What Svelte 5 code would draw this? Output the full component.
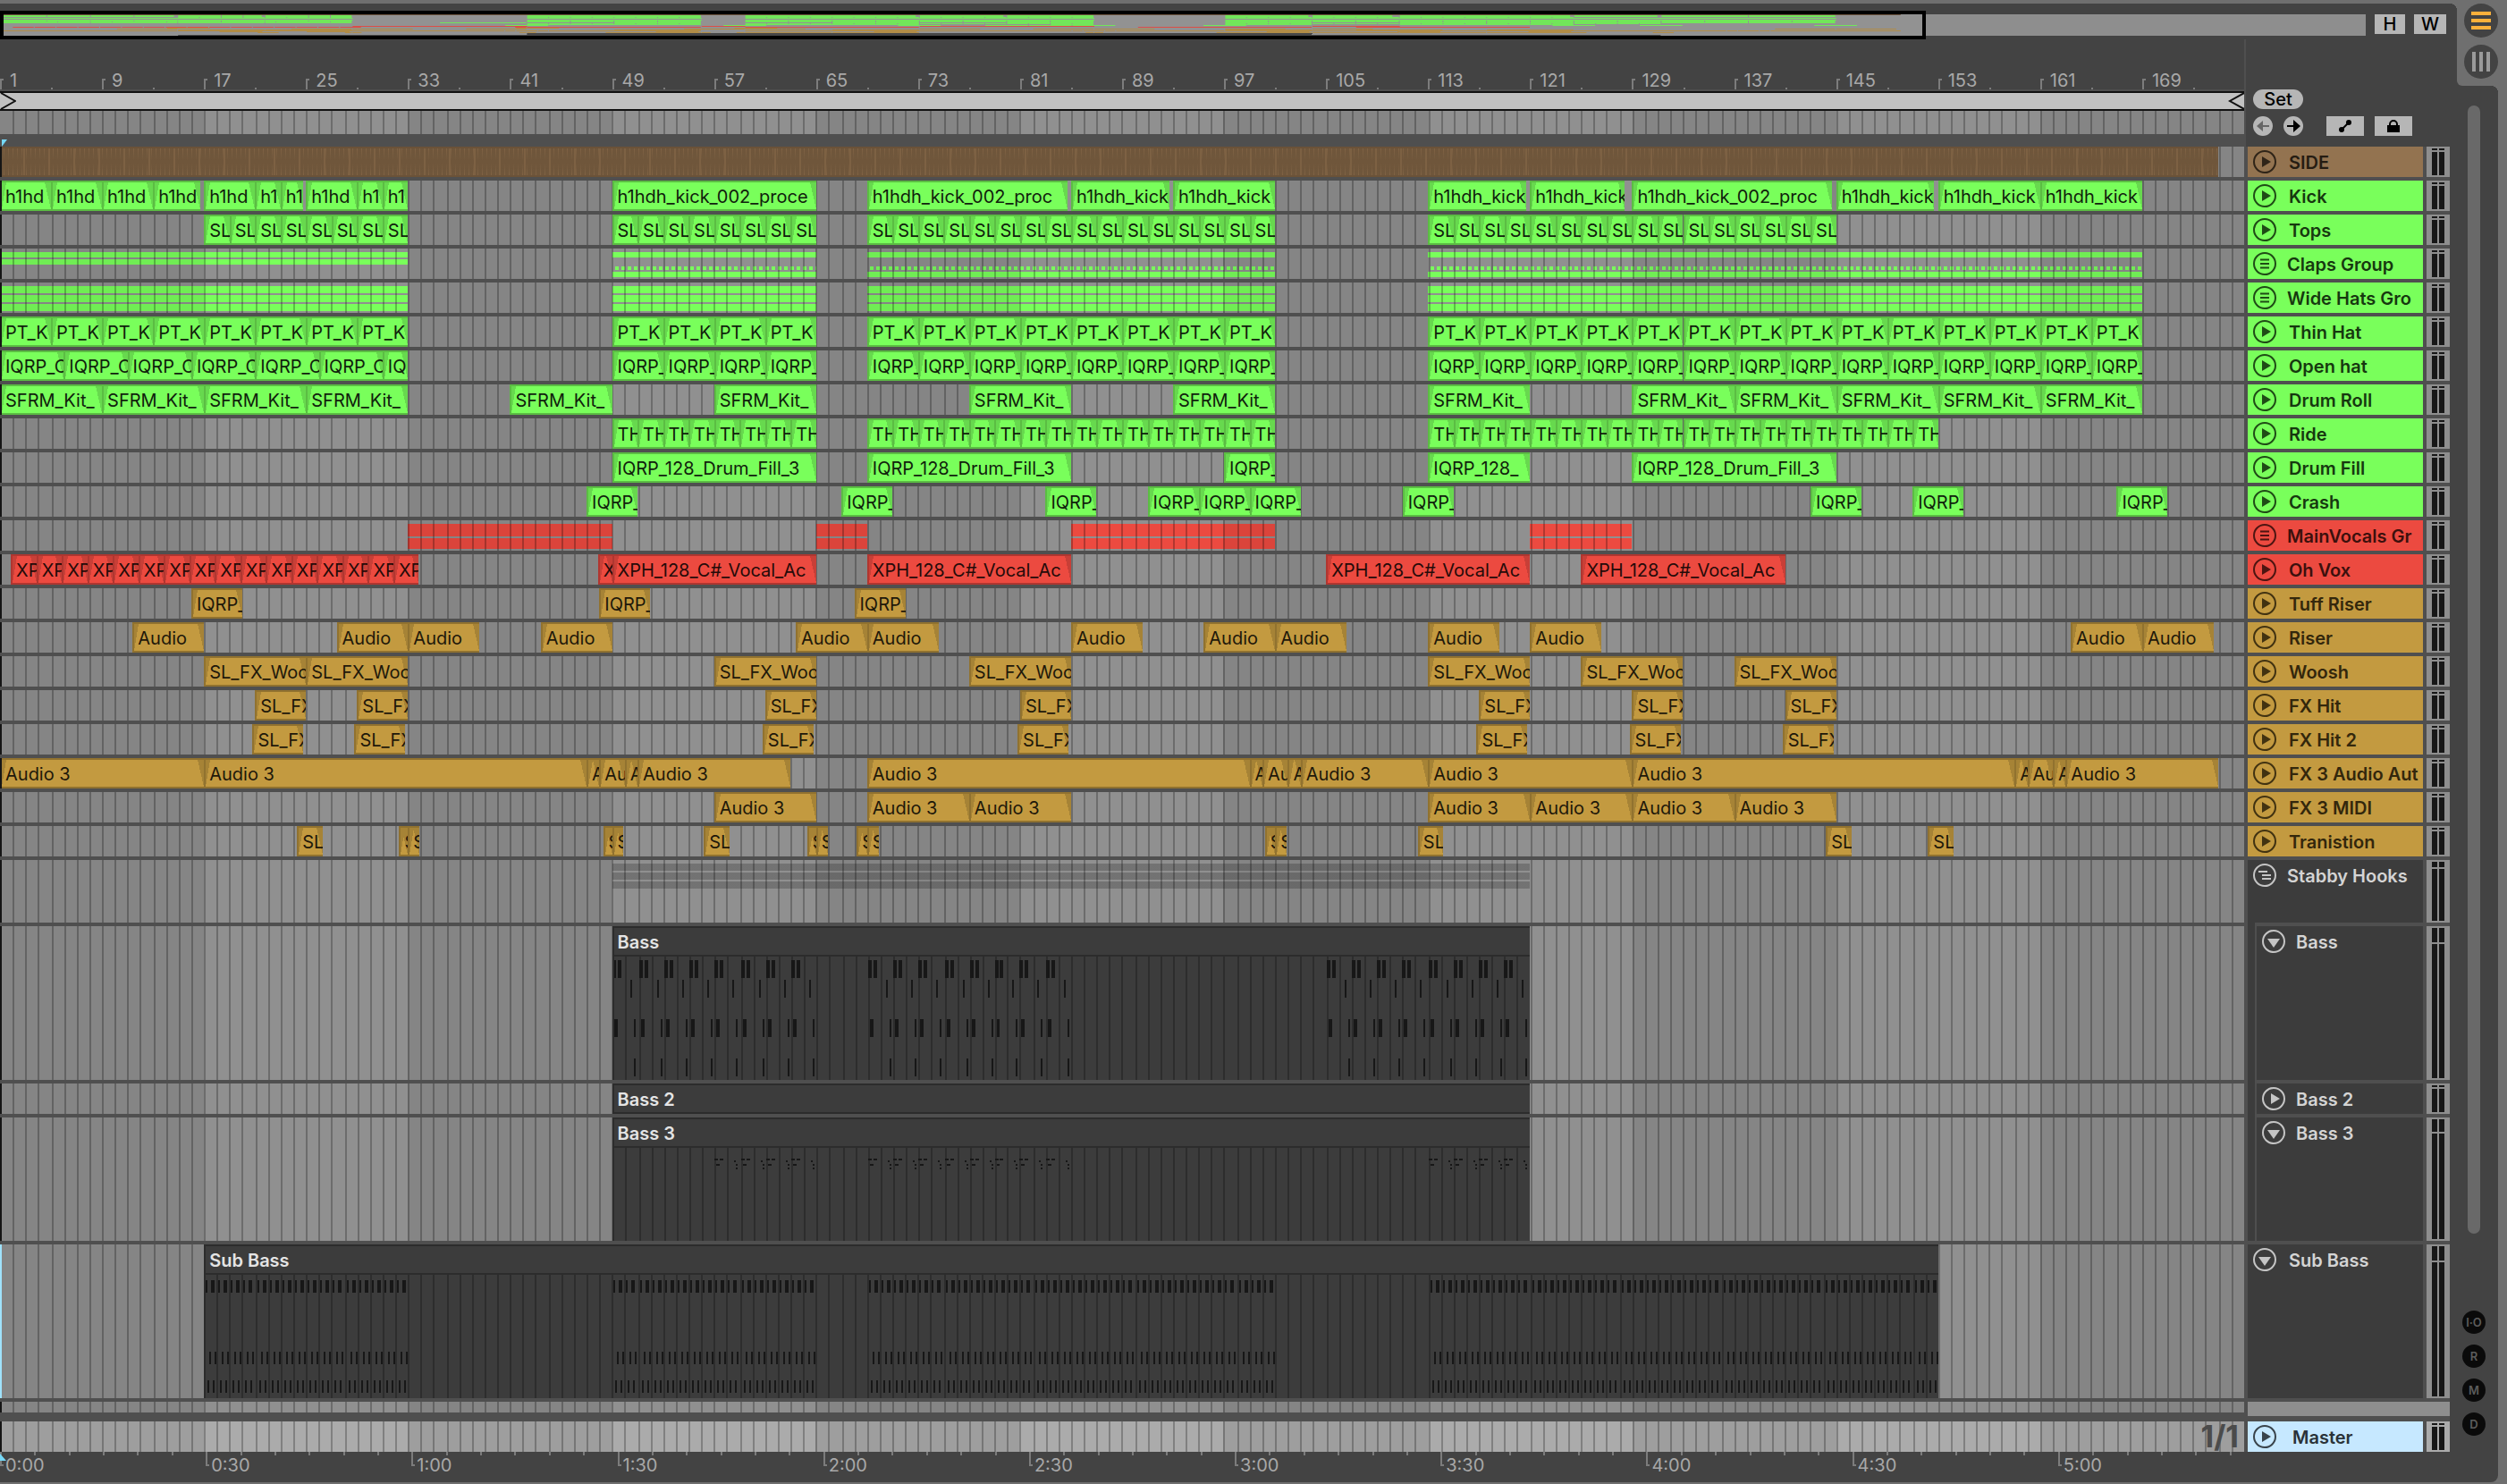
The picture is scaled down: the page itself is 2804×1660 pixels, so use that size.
<script lang="ts">
  type Clip = { from: number; to: number; name: string };
  type Track = {
    name: string;
    color: string;
    size?: string;
    icon?: string;
    child?: boolean;
    selected?: boolean;
    clips?: Clip[];
    bands?: { from: number; to: number; style: string }[];
    midi?: { from: number; to: number; notes: string };
    overview: [number, number];
  };

  const BARS = 176;
  const UNIT = 14.26;
  const pct = (bars: number) => (bars * 100) / BARS;
  const snap = (bars: number) => 2 * Math.round((bars * UNIT) / 2);

  // clips of equal length, one after another
  function run(from: number, to: number, step: number, name: string): Clip[] {
    const out: Clip[] = [];
    for (let b = from; b < to - 0.01; b += step) out.push({ from: b, to: Math.min(b + step, to), name });
    return out;
  }
  const at = (starts: number[], length: number, name: string): Clip[] =>
    starts.map((from) => ({ from, to: from + length, name }));
  const cuts = (points: number[], name: string): Clip[] =>
    points.slice(0, -1).map((from, i) => ({ from, to: points[i + 1], name: shorten(name, points[i + 1] - from) }));

  // keep about as much of a name as its clip has room for
  function shorten(name: string, bars: number) {
    if (name === 'Audio 3') return bars < 1.5 ? 'A' : bars < 3 ? 'Au' : name;
    if (name.startsWith('XPH')) return bars < 2 ? 'X' : name;
    if (name.startsWith('IQRP')) return bars < 6 ? 'IQRP_' : bars < 10 ? 'IQRP_128_' : name;
    if (name.startsWith('h1hdh')) return name.slice(0, bars < 3 ? 2 : bars < 6 ? 4 : bars < 10 ? 10 : bars < 16 ? 19 : 20);
    return name;
  }

  const lines = Array.from({ length: BARS - 1 }, (_, i) => `M${snap(i + 1)} 0h2v10h-2z`).join('');
  const shades = [0, 32, 64, 96, 128, 160].map((b) => `M${snap(b)} 0H${snap(Math.min(b + 16, BARS))}V10H${snap(b)}z`).join('');

  const note = (bar: number, dx: number, y: number, w: number, h: number) =>
    `M${snap(bar - 1) + dx} ${y}h${w}v${h}h-${w}z`;

  function bassNotes(): string {
    let d = '';
    for (const start of [49, 69, 105]) {
      for (let b = start; b < start + 16; b += 2) {
        d += note(b, 0, 4, 4, 20) + note(b, 6, 4, 4, 20);
        d += note(b, 20, 26, 2, 20);
        d += note(b, 2, 70, 4, 20) + note(b, 24, 70, 2, 20);
        d += note(b, 24, 114, 2, 20);
      }
    }
    return d;
  }

  function bass3Notes(): string {
    let d = '';
    for (const [start, end] of [[57, 65], [69, 85], [113, 121]]) {
      for (let b = start; b < end; b += 2) {
        d += note(b, 0, 12, 4, 2) + note(b, 6, 12, 4, 2) + note(b, 22, 14, 2, 2);
        d += note(b, 2, 18, 4, 2) + note(b, 24, 18, 2, 2) + note(b, 24, 22, 2, 2);
      }
    }
    return d;
  }

  function subNotes(): string {
    let d = '';
    for (const [start, end] of [[17, 33], [49, 65], [69, 101], [113, 153]]) {
      for (let b = start; b < end; b++) {
        d += note(b, 2, 6, 2, 14) + note(b, 8, 6, 4, 14);
        d += note(b, 6, 86, 2, 14) + note(b, 12, 86, 2, 14);
        d += note(b, 4, 118, 2, 14) + note(b, 10, 118, 2, 14);
      }
    }
    return d;
  }

  const sections = [[1, 33], [49, 65], [69, 101], [113, 169]];
  const hits = [21, 29, 61, 81, 117, 129, 141];
  const kick = 'h1hdh_kick_002_processed';

  const tracks: Track[] = [
    { name: 'SIDE', color: 'brown', clips: [{ from: 1, to: 175, name: '' }], overview: [0, 1] },
    {
      name: 'Kick', color: 'green', overview: [1, 2],
      clips: [
        ...cuts([1, 5, 9, 13, 16.7], kick), ...cuts([17, 21, 23, 24.75], kick), ...cuts([25, 29, 31, 33], kick),
        ...cuts([49, 65], kick), ...cuts([69, 84.7], kick), ...cuts([85, 92.75], kick), ...cuts([93, 101], kick),
        ...cuts([113, 120.7], kick), ...cuts([121, 128.4], kick), ...cuts([129, 144.7], kick),
        ...cuts([145, 152.7], kick), ...cuts([153, 161, 169], kick)
      ]
    },
    {
      name: 'Tops', color: 'green', overview: [3, 1],
      clips: [[17, 33], [49, 65], [69, 101], [113, 145]].flatMap(([a, b]) => run(a, b, 2, 'SL'))
    },
    {
      name: 'Claps Group', color: 'green', icon: 'group', overview: [4, 1],
      bands: sections.map(([from, to], i) => ({ from, to, style: i ? 'claps' : 'claps-intro' }))
    },
    {
      name: 'Wide Hats Gro', color: 'green', icon: 'group', overview: [6, 1],
      bands: sections.map(([from, to]) => ({ from, to, style: 'thirds' }))
    },
    { name: 'Thin Hat', color: 'green', overview: [7, 1], clips: sections.flatMap(([a, b]) => run(a, b, 4, 'PT_K')) },
    {
      name: 'Open hat', color: 'green', overview: [8, 1],
      clips: [
        ...run(1, 31, 5, 'IQRP_O'), { from: 31, to: 33, name: 'IQ' },
        ...sections.slice(1).flatMap(([a, b]) => run(a, b, 4, 'IQRP_'))
      ]
    },
    {
      name: 'Drum Roll', color: 'green', overview: [9, 1],
      clips: at([1, 9, 17, 25, 41, 57, 77, 93, 113, 129, 137, 145, 153, 161], 8, 'SFRM_Kit_')
    },
    {
      name: 'Ride', color: 'green', overview: [10, 1],
      clips: [[49, 65], [69, 101], [113, 153]].flatMap(([a, b]) => run(a, b, 2, 'TH'))
    },
    {
      name: 'Drum Fill', color: 'green', overview: [11, 1],
      clips: [[49, 65], [69, 85], [97, 101], [113, 121], [129, 145]].flatMap((p) => cuts(p, 'IQRP_128_Drum_Fill_3'))
    },
    { name: 'Crash', color: 'green', overview: [12, 1], clips: at([47, 67, 83, 91, 95, 99, 111, 143, 151, 167], 4, 'IQRP_') },
    {
      name: 'MainVocals Gr', color: 'red', icon: 'group', overview: [13, 1],
      bands: [[33, 49], [65, 69], [85, 101], [121, 129]].map(([from, to]) => ({ from, to, style: 'halves' }))
    },
    {
      name: 'Oh Vox', color: 'red', overview: [14, 1],
      clips: [...run(1.85, 33.85, 2, 'XP'), ...cuts([47.9, 49, 65], 'XPH_128_C#_Vocal_Ac'), ...at([69, 105, 125], 16, 'XPH_128_C#_Vocal_Ac')]
    },
    { name: 'Tuff Riser', color: 'gold', overview: [15, 1], clips: at([16, 48, 68], 4, 'IQRP_') },
    {
      name: 'Riser', color: 'gold', overview: [16, 1],
      clips: at([11.4, 27.4, 33, 43.4, 63.4, 69, 85, 95.4, 101, 113, 121, 163.4, 169], 5.6, 'Audio')
    },
    { name: 'Woosh', color: 'gold', overview: [17, 1], clips: at([17, 25, 57, 77, 113, 125, 137], 8, 'SL_FX_Woo') },
    { name: 'FX Hit', color: 'gold', overview: [18, 1], clips: at(hits, 4, 'SL_FX') },
    { name: 'FX Hit 2', color: 'gold', overview: [19, 1], clips: at(hits.map((b) => b - 0.2), 4, 'SL_FX') },
    {
      name: 'FX 3 Audio Aut', color: 'gold', overview: [18, 1],
      clips: [...cuts([1, 17, 47, 48, 50, 51, 63], 'Audio 3'), ...cuts([69, 99, 100, 102, 103, 113, 129, 159, 160, 162, 163, 175], 'Audio 3')]
    },
    { name: 'FX 3 MIDI', color: 'gold', overview: [20, 1], clips: at([57, 69, 77, 113, 121, 129, 137], 8, 'Audio 3') },
    {
      name: 'Tranistion', color: 'gold', overview: [20, 1],
      clips: [
        ...at([24.3, 56.2, 112.2, 144.2, 152.2], 2, 'SL'), ...cuts([32.3, 33, 33.9], 'S'), ...cuts([48.3, 49, 49.9], 'S'),
        ...cuts([64.3, 65, 65.9], 'S'), ...cuts([68.2, 69, 69.9], 'S'), ...cuts([100.2, 101, 101.9], 'S')
      ]
    },
    { name: 'Stabby Hooks', color: 'dark', size: 'stack', icon: 'nested', overview: [21, 1], bands: [{ from: 49, to: 121, style: 'thirds' }] },
    { name: 'Bass', color: 'dark', size: 'tall', icon: 'fold', child: true, overview: [21, 1], midi: { from: 49, to: 121, notes: bassNotes() } },
    { name: 'Bass 2', color: 'dark', child: true, overview: [22, 1], midi: { from: 49, to: 121, notes: '' } },
    { name: 'Bass 3', color: 'dark', size: 'mid', icon: 'fold', child: true, overview: [22, 1], midi: { from: 49, to: 121, notes: bass3Notes() } },
    { name: 'Sub Bass', color: 'dark', size: 'tall', icon: 'fold', selected: true, overview: [23, 1], midi: { from: 17, to: 153, notes: subNotes() } }
  ];

  const spans = (t: Track) => [...(t.clips ?? []), ...(t.bands ?? []), ...(t.midi ? [t.midi] : [])];
  const barLabels = Array.from({ length: 22 }, (_, i) => 1 + i * 8);
  const HALF_MINUTE = 16.14;
  const timeMarks = Array.from({ length: 66 }, (_, i) => i);
  const clock = (s: number) => `${Math.floor(s / 60)}:${String(s % 60).padStart(2, '0')}`;
</script>

{#snippet grid()}
  <svg class="grid" viewBox="0 0 2510 10" preserveAspectRatio="none" aria-hidden="true">
    <path class="shade" d={shades} />
    <path class="lines" d={lines} />
  </svg>
{/snippet}

{#snippet icon(kind: string)}
  <svg class="icon" viewBox="0 0 26 26" aria-hidden="true">
    <circle cx="13" cy="13" r="12" fill="none" stroke="currentColor" stroke-width="2" />
    {#if kind === 'group'}
      <path d="M8 8.5h10M8 13h10M8 17.5h10" stroke="currentColor" stroke-width="2" />
    {:else if kind === 'nested'}
      <path d="M6 9h10M10 13h10M10 17h10" stroke="currentColor" stroke-width="2" />
    {:else if kind === 'fold'}
      <path d="M6 10h14l-7 10z" fill="currentColor" />
    {:else}
      <path d="M10 7l10 6-10 6z" fill="currentColor" />
    {/if}
  </svg>
{/snippet}

{#snippet meter()}
  <div class="meter">
    <div class="channel"><i class="peak"></i><i class="level"></i></div>
    <div class="channel"><i class="peak"></i><i class="level"></i></div>
  </div>
{/snippet}

<div class="app">
  <nav class="views" aria-label="Views">
    <button aria-label="Arrangement view">
      <svg viewBox="0 0 38 38"><path d="M8 11h22M8 19h22M8 27h22" stroke="#fbb03b" stroke-width="4" /></svg>
    </button>
    <button aria-label="Session view">
      <svg viewBox="0 0 38 38"><path d="M11 8v22M19 8v22M27 8v22" stroke="#9a9a9a" stroke-width="4" /></svg>
    </button>
  </nav>

  <div class="panel">
    <div class="overview-row">
      <div class="overview">
        <svg class="window" viewBox="0 0 2146 24" preserveAspectRatio="none" aria-hidden="true">
          {#each tracks as t}
            {#each spans(t) as s}
              <rect class="mini {t.color}" x={(s.from - 1) * 12.2} y={t.overview[0]} width={(s.to - s.from) * 12.2 - (t.bands ? 0 : 1)} height={t.overview[1]} />
            {/each}
          {/each}
        </svg>
        <div class="beyond"></div>
      </div>
      <button class="flat zoom-height">H</button>
      <button class="flat zoom-width">W</button>
    </div>

    <div class="body">
      <div class="arranger">
        <div class="head">
          <div class="rulers">
            <div class="bars">
              {#each barLabels as bar}
                <span class="mark" style="left: {pct(bar - 1)}%">{bar}</span>
                <i class="minor" style="left: {pct(bar + 3)}%"></i>
              {/each}
            </div>
            <div class="loop">
              <svg viewBox="0 0 18 18"><path d="M1 0l16 9-16 9" fill="none" stroke="#111" stroke-width="2" /></svg>
              <svg viewBox="0 0 18 18"><path d="M18 0L2 9l16 9" fill="none" stroke="#111" stroke-width="2" /></svg>
            </div>
            <div class="scrub">{@render grid()}</div>
            <div class="locators"><i></i></div>
          </div>
          <div class="controls">
            <button class="set">Set</button>
            <div class="tools">
              <button class="round" aria-label="Previous locator">
                <svg viewBox="0 0 22 22"><path d="M11 5l-7 6 7 6v-5h7v-2h-7z" fill="#666" /></svg>
              </button>
              <button class="round" aria-label="Next locator">
                <svg viewBox="0 0 22 22"><path d="M11 4l8 7-8 7v-6H4v-2h7z" fill="#000" /></svg>
              </button>
              <button class="flat tool automation" aria-label="Automation mode">
                <svg viewBox="0 0 42 22"><path d="M17 15l8-8" stroke="#000" stroke-width="2" /><circle cx="17" cy="15" r="3" /><circle cx="25" cy="7" r="3" /></svg>
              </button>
              <button class="flat tool" aria-label="Lock envelopes">
                <svg viewBox="0 0 42 22"><path d="M17 11V9a4 4 0 0 1 8 0v2" fill="none" stroke="#000" stroke-width="2" /><path d="M14 10h14v8H14z" /></svg>
              </button>
            </div>
          </div>
        </div>

        {#each tracks as t}
          <div class="track {t.color} {t.size ?? 'short'}">
            <div class="lane" class:selected={t.selected}>
              {#each t.bands ?? [] as b}
                <div class="band {b.style}" style="left: {pct(b.from - 1)}%; width: {pct(b.to - b.from)}%"></div>
              {/each}
              {@render grid()}
              {#each t.clips ?? [] as c}
                <div class="clip" style="left: {pct(c.from - 1)}%; width: {pct(c.to - c.from)}%">{c.name}</div>
              {/each}
              {#if t.midi}
                {@const x = snap(t.midi.from - 1)}
                {@const w = snap(t.midi.to - 1) - x}
                <div class="midi" style="left: {pct(t.midi.from - 1)}%; width: {pct(t.midi.to - t.midi.from)}%">
                  <div class="midi-name">{t.name}</div>
                  {#if t.midi.notes}
                    <div class="notes">
                      <svg class="grid" viewBox="{x} 0 {w} 10" preserveAspectRatio="none" aria-hidden="true"><path class="lines" d={lines} /></svg>
                      <svg class="grid" viewBox="{x} 0 {w} 138" preserveAspectRatio="none" aria-hidden="true" class:low={t.size === 'mid'}><path class="note" d={t.midi.notes} /></svg>
                    </div>
                  {/if}
                </div>
              {/if}
            </div>
            <div class="header" class:child={t.child}>
              <div class="title" class:group={t.icon === 'group' || t.icon === 'nested'}>
                <button class="fold" aria-label="Unfold {t.name}">{@render icon(t.icon ?? 'play')}</button>
                <span>{t.name}</span>
              </div>
            </div>
            {@render meter()}
          </div>
        {/each}

        <div class="drop">
          <div class="lane">{@render grid()}</div>
          <div class="rest"></div>
        </div>

        <div class="track short master">
          <div class="lane">
            {@render grid()}
            <span class="quantize">1/1</span>
          </div>
          <div class="header">
            <div class="title">
              <button class="fold" aria-label="Unfold Master">{@render icon('play')}</button>
              <span>Master</span>
            </div>
          </div>
          {@render meter()}
        </div>

        <div class="clock">
          <div class="times">
            {#each timeMarks as m}
              {#if m % 6 === 0}
                <span class="time" style="left: {pct((m / 6) * HALF_MINUTE)}%">{clock(m * 5)}</span>
              {:else}
                <i class="minor" style="left: {pct((m / 6) * HALF_MINUTE)}%"></i>
              {/if}
            {/each}
            <i class="start"></i>
          </div>
        </div>
      </div>

      <aside class="side">
        <div class="thumb"></div>
        <button class="toggle">I·O</button>
        <button class="toggle">R</button>
        <button class="toggle">M</button>
        <button class="toggle">D</button>
      </aside>
    </div>
  </div>
</div>

<style>
  :global(body) { background: #6f6f6f; }
  button { border: 0; padding: 0; margin: 0; font: inherit; color: inherit; cursor: pointer; }
  svg { display: block; }

  .app { position: relative; padding: 4px 10px 2px 0; background: #6f6f6f; font-family: Inter, "Noto Sans", sans-serif; font-size: 20px; line-height: 24px; color: #a8a8a8; overflow: hidden; }
  .panel { background: #434343; border-radius: 0 8px 8px 0; }

  .views { position: absolute; top: 0; right: 0; z-index: 3; box-sizing: border-box; width: 56px; height: 96px; padding: 4px 10px 0 8px; display: flex; flex-direction: column; gap: 8px; background: #6f6f6f; border-bottom-left-radius: 6px; }
  .views button { width: 38px; height: 38px; border-radius: 50%; background: #434343; }
  .views::before, .views::after { content: ""; position: absolute; width: 8px; height: 8px; background: radial-gradient(circle at 0 100%, transparent 8px, #6f6f6f 8px); }
  .views::before { left: -8px; top: 4px; }
  .views::after { right: 10px; top: 96px; }

  .overview-row { display: flex; align-items: flex-start; padding: 8px 58px 0 0; }
  .overview { flex: 1; display: flex; align-items: center; }
  .window { flex: 2146; min-width: 0; height: 24px; border: 4px solid #000; background: #929292; }
  .beyond { flex: 492; height: 24px; background: #8e8e8e; }
  .flat { background: #b6b6b6; color: #000; height: 22px; line-height: 22px; }
  .overview-row .flat { margin-top: 4px; font-weight: 500; }
  .zoom-height { width: 34px; margin-left: 10px; }
  .zoom-width { width: 36px; margin-left: 10px; }
  .mini { fill: var(--mini); }

  .body { display: flex; }
  .arranger { flex: 1; min-width: 0; }
  .head { display: flex; background: #434343; }
  .rulers { flex: 1; min-width: 0; border-right: 2px solid #4f4f4f; margin-right: -2px; }
  .bars { position: relative; height: 56px; border-bottom: 2px solid #4f4f4f; }
  .mark { position: absolute; bottom: 0; height: 12px; padding-left: 9px; border-left: 2px solid #7c7c7c; line-height: 4px; }
  .mark::before { content: ""; position: absolute; left: 0; top: 0; width: 2px; height: 2px; background: #7c7c7c; }
  .bars .minor { position: absolute; bottom: 0; width: 2px; height: 2px; background: #7c7c7c; }
  .loop { display: flex; justify-content: space-between; background: #c1c1c1; border: solid #111; border-width: 2px 0; }
  .loop svg { width: 18px; height: 18px; }
  .scrub { position: relative; height: 26px; background: #909090; }
  .locators { height: 14px; background: #4f4f4f; overflow: hidden; }
  .locators i { display: block; width: 6px; height: 8px; margin: 6px 0 0 2px; background: #75d8f7; clip-path: polygon(0 0, 100% 0, 0 100%); }

  .controls { width: 230px; box-sizing: border-box; padding: 56px 0 0 10px; }
  .set { display: block; width: 56px; height: 22px; line-height: 22px; border-radius: 11px; background: #b6b6b6; color: #000; font-weight: 500; }
  .tools { display: flex; margin-top: 8px; }
  .round { width: 22px; height: 22px; border-radius: 50%; background: #b6b6b6; margin-right: 12px; }
  .tool { width: 42px; }
  .automation { margin: 0 12px 0 14px; }

  .track { display: flex; gap: 4px; padding-bottom: 4px; background: #4f4f4f; --ink: #111; }
  .short { height: 34px; --peak: 2px; }
  .stack { height: 70px; --peak: 6px; }
  .tall { height: 172px; --peak: 16px; }
  .mid { height: 138px; --peak: 14px; }
  .green { --fill: #79ff5b; --edge: #5bbd43; --fade: #67d94e; --mini: #72e65a; --ink: #16380f; --text: #10210c; }
  .red { --fill: #ec4a40; --edge: #b03630; --fade: #c83f37; --mini: #dc4d46; --ink: #3c100d; --text: #250b09; }
  .gold { --fill: #c39a40; --edge: #91722f; --fade: #a68336; --mini: #b18c47; --ink: #33270c; --text: #1e180a; }
  .brown { --fill: #937350; --edge: #6b5238; --fade: #705639; --mini: #6b513b; --ink: #251c12; --text: #1c150d; }
  .dark { --fill: #3c3c3c; --edge: #2c2c2c; --fade: #333; --mini: #474747; --ink: #d4d4d4; }

  .lane { position: relative; flex: 1; min-width: 0; background: #909090; overflow: hidden; }
  .lane::before { content: ""; position: absolute; z-index: 2; inset: 0 auto 0 0; width: 2px; background: #151515; }
  .lane.selected::before { background: #9fe2fb; }
  .grid { position: absolute; inset: 0; width: 100%; height: 100%; shape-rendering: crispEdges; }
  .shade { fill: rgba(0, 0, 0, 0.07); }
  .lines { fill: rgba(0, 0, 0, 0.25); }
  .note { fill: #171717; }

  .clip { position: absolute; top: 0; bottom: 0; box-sizing: border-box; padding-left: 4px; border: solid var(--edge); border-width: 2px 0 2px 2px; overflow: hidden; white-space: nowrap; line-height: 32px; color: var(--text); background: linear-gradient(to bottom right, var(--fade) 50%, transparent 50%) left / 5px 100% no-repeat, linear-gradient(to bottom left, var(--fade) 50%, transparent 50%) right / 7px 100% no-repeat, var(--fill); }
  .brown .clip { border-left: 0; background: linear-gradient(to bottom, transparent, #6f563b 45%, #6f563b 55%, transparent), repeating-linear-gradient(to right, transparent 0 4px, #806345 4px 5px), #6f563b; }
  .brown .clip::after { content: ""; position: absolute; inset: 0; background: repeating-linear-gradient(to right, transparent 0 26px, #7d6143 26px 28px); }
  .band { position: absolute; top: 4px; height: 28px; }
  .thirds { background: linear-gradient(var(--fill) 8px, transparent 8px 10px, var(--fill) 10px 18px, transparent 18px 20px, var(--fill) 20px); }
  .dark .thirds { opacity: 0.35; }
  .halves { background: linear-gradient(var(--fill) 14px, transparent 14px 16px, var(--fill) 16px); }
  .claps-intro { background: linear-gradient(var(--fill) 6px, transparent 6px 8px, var(--fill) 8px 14px, transparent 14px); }
  .claps { background: repeating-linear-gradient(to right, transparent 0 3px, var(--fill) 3px 7px) 0 16px / 100% 4px no-repeat, linear-gradient(var(--fill) 6px, transparent 6px 22px, var(--fill) 22px); }

  .midi { position: absolute; top: 0; bottom: 0; display: flex; flex-direction: column; box-sizing: border-box; border-left: 2px solid #2c2c2c; background: #3c3c3c; }
  .midi-name { box-sizing: border-box; height: 34px; padding-left: 4px; border: solid #2c2c2c; border-width: 2px 0; line-height: 32px; font-weight: 600; color: #e4e4e4; }
  .notes { position: relative; flex: 1; overflow: hidden; }
  .notes .grid { left: -2px; width: calc(100% + 2px); }
  .notes .grid.low { height: 138px; }

  .header { width: 196px; background: var(--fill); color: var(--ink); overflow: hidden; }
  .header.child { position: relative; box-sizing: border-box; padding-left: 8px; overflow: visible; }
  .header.child::before { content: ""; position: absolute; left: 0; top: -4px; width: 8px; height: 4px; background: var(--fill); }
  .header.child .title { box-sizing: border-box; height: 100%; border-left: 2px solid #4f4f4f; gap: 12px; }
  .title { display: flex; align-items: flex-start; padding: 4px 0 0 6px; gap: 14px; font-weight: 600; line-height: 28px; white-space: nowrap; }
  .title.group { gap: 12px; }
  .fold { width: 26px; height: 26px; background: none; opacity: 0.9; }
  .meter { box-sizing: border-box; width: 26px; padding: 2px 6px; display: flex; gap: 2px; background: #8e8e8e; }
  .channel { width: 6px; display: flex; flex-direction: column; gap: 2px; }
  .peak { height: var(--peak); background: #171717; }
  .level { flex: 1; background: #171717; }

  .drop { display: flex; gap: 4px; height: 16px; padding-bottom: 6px; background: #4f4f4f; }
  .drop .lane { height: 12px; }
  .rest { width: 226px; background: #8e8e8e; }
  .master { --fill: #c6e8ff; --ink: #2a3238; padding-bottom: 0; }
  .master .lane, .master .meter { background: #ababab; }
  .master .title { gap: 18px; }
  .quantize { position: absolute; right: 6px; top: 0; font-size: 34px; line-height: 34px; font-weight: 700; color: #4b4b4b; }

  .clock { height: 34px; padding-right: 230px; }
  .times { position: relative; height: 34px; }
  .time { position: absolute; top: 0; height: 16px; padding-left: 4px; border-left: 2px solid #7c7c7c; line-height: 31px; }
  .time::before { content: ""; position: absolute; left: 0; bottom: 0; width: 2px; height: 2px; background: #7c7c7c; }
  .times .minor { position: absolute; top: 0; width: 2px; height: 4px; background: #7c7c7c; }
  .start { position: absolute; left: 0; top: 2px; width: 7px; height: 8px; background: #75d8f7; clip-path: polygon(0 0, 100% 100%, 0 100%); }

  .side { width: 54px; box-sizing: border-box; padding: 74px 0 52px; display: flex; flex-direction: column; align-items: center; gap: 12px; }
  .thumb { flex: 1; width: 14px; margin-bottom: 74px; border-radius: 7px; background: #696969; }
  .toggle { width: 26px; height: 26px; border-radius: 50%; background: #0a0a0a; color: #5c5c5c; font-size: 13px; line-height: 26px; font-weight: 600; }
</style>
